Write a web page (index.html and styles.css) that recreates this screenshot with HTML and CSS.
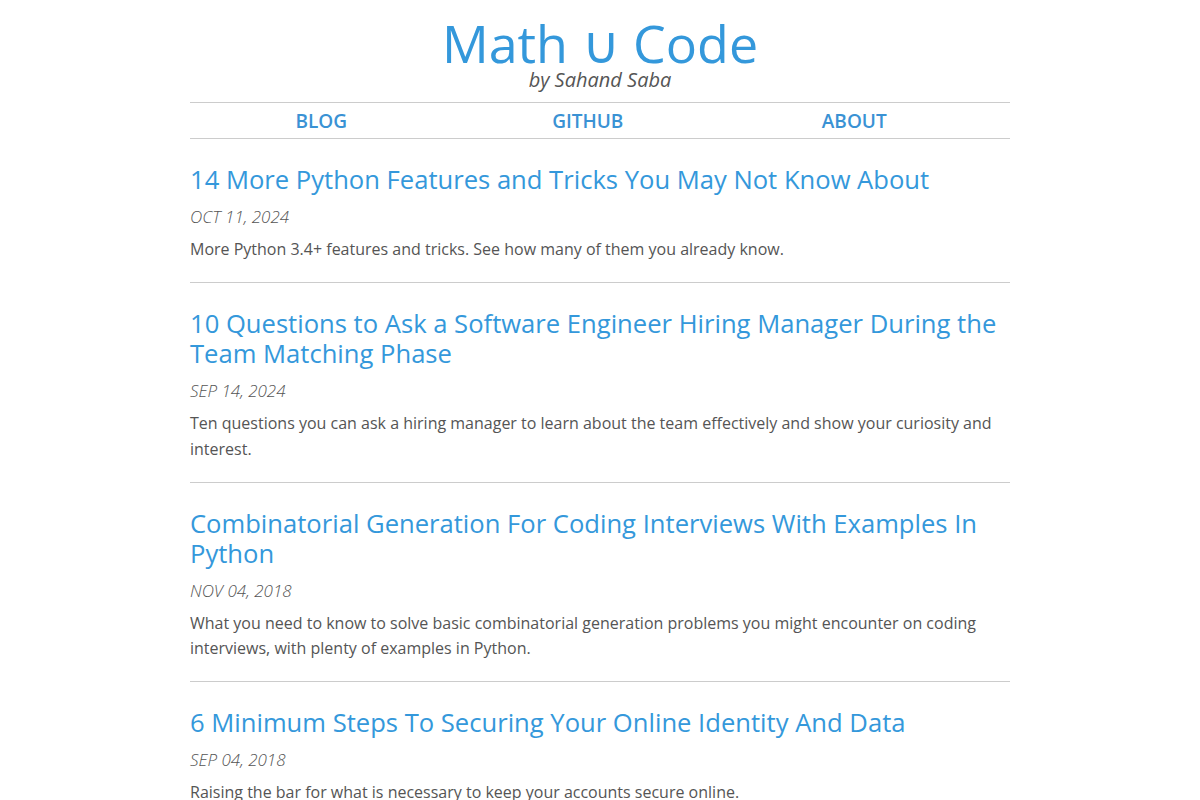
FILE: index.html
```html
<!DOCTYPE html>
<html lang="en">
<head>
  <meta charset="UTF-8">
  <title>Math ∪ Code</title>
  <link rel="stylesheet" href="styles.css">
</head>
<body>

  <div class="container">
    <header class="site-header">
      <h1 class="site-title"><a href="#">Math ∪ Code</a></h1>
      <div class="site-author">by Sahand Saba</div>
    </header>

    <nav class="site-nav">
      <a href="#">Blog</a>
      <a href="#">GitHub</a>
      <a href="#">About</a>
    </nav>

    <div class="posts">
      <article class="post">
        <h2 class="post-title"><a href="#">14 More Python Features and Tricks You May Not Know About</a></h2>
        <p class="post-date">Oct 11, 2024</p>
        <p class="post-summary">More Python 3.4+ features and tricks. See how many of them you already know.</p>
      </article>

      <article class="post">
        <h2 class="post-title"><a href="#">10 Questions to Ask a Software Engineer Hiring Manager During the Team Matching Phase</a></h2>
        <p class="post-date">Sep 14, 2024</p>
        <p class="post-summary">Ten questions you can ask a hiring manager to learn about the team effectively and show your curiosity and interest.</p>
      </article>

      <article class="post">
        <h2 class="post-title"><a href="#">Combinatorial Generation For Coding Interviews With Examples In Python</a></h2>
        <p class="post-date">Nov 04, 2018</p>
        <p class="post-summary">What you need to know to solve basic combinatorial generation problems you might encounter on coding interviews, with plenty of examples in Python.</p>
      </article>

      <article class="post">
        <h2 class="post-title"><a href="#">6 Minimum Steps To Securing Your Online Identity And Data</a></h2>
        <p class="post-date">Sep 04, 2018</p>
        <p class="post-summary">Raising the bar for what is necessary to keep your accounts secure online.</p>
      </article>
    </div>
  </div>

</body>
</html>
```

FILE: styles.css
```css
* {
  box-sizing: border-box;
}

body {
  font-family: 'Open Sans', 'Noto Sans', sans-serif;
  background: #ffffff;
  color: #555555;
  margin: 0;
  padding: 0;
}

a {
  color: #3498db;
  text-decoration: none;
}

.container {
  width: 820px;
  margin: 0 auto;
}

.site-header {
  text-align: center;
  padding-top: 15px;
}

.site-title {
  font-size: 52px;
  font-weight: normal;
  line-height: 56px;
  margin: 0;
}

.site-author {
  font-size: 20px;
  font-style: italic;
  line-height: 24px;
  margin-top: -3px;
}

.site-nav {
  display: grid;
  grid-template-columns: repeat(3, 266.5px);
  margin-top: 10px;
  padding: 2px 4px 0 0;
  border-top: 1px solid #cccccc;
  border-bottom: 1px solid #cccccc;
  text-align: center;
}

.site-nav a {
  font-size: 19px;
  font-weight: 600;
  line-height: 33px;
  text-transform: uppercase;
  color: #3a92d4;
  margin-left: -4px;
}

.post {
  padding: 26px 0 19.5px;
  border-bottom: 1px solid #cccccc;
}

.post-title {
  font-size: 25.6px;
  font-weight: normal;
  line-height: 30px;
  margin: 0 0 10px;
}

.post-date {
  font-size: 17px;
  font-style: italic;
  font-weight: 300;
  text-transform: uppercase;
  line-height: 24px;
  margin: 0 0 8px;
}

.post-summary {
  font-size: 16px;
  line-height: 1.6;
  margin: 0;
}
```
